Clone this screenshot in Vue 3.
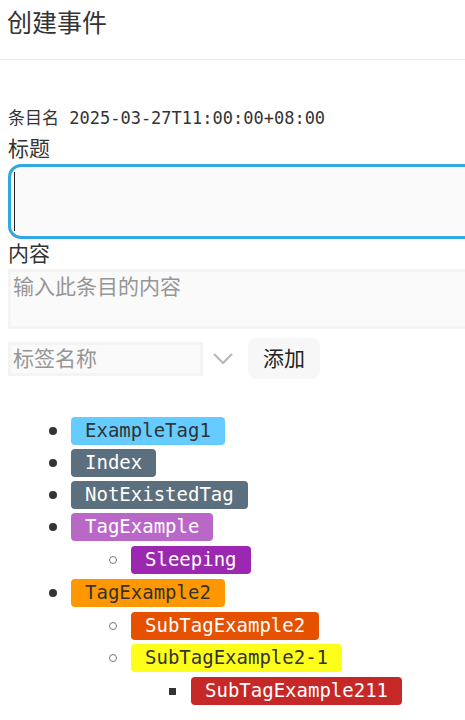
<script setup>
import { ref, h } from 'vue'

const title = ref('')
const content = ref('')
const tagName = ref('')

const tags = [
  { name: 'ExampleTag1', color: 'sky' },
  { name: 'Index', color: 'slate' },
  { name: 'NotExistedTag', color: 'slate' },
  { name: 'TagExample', color: 'orchid', children: [{ name: 'Sleeping', color: 'purple' }] },
  {
    name: 'TagExample2',
    color: 'orange',
    children: [
      { name: 'SubTagExample2', color: 'rust' },
      {
        name: 'SubTagExample2-1',
        color: 'yellow',
        children: [{ name: 'SubTagExample211', color: 'red' }],
      },
    ],
  },
]

const TagList = (props) =>
  h(
    'ul',
    { class: 'tags' },
    props.items.map((tag) =>
      h('li', { key: tag.name }, [
        h('div', { class: 'tag-row' }, [h('span', { class: ['tag', tag.color] }, tag.name)]),
        tag.children ? h(TagList, { items: tag.children }) : null,
      ]),
    ),
  )
TagList.props = ['items']
</script>

<template>
  <main class="page">
    <header class="header">
      <h1>创建事件</h1>
    </header>
    <form class="form" @submit.prevent>
      <p class="entry">条目名 2025-03-27T11:00:00+08:00</p>
      <label class="label" for="title">标题</label>
      <div class="title-box">
        <input id="title" v-model="title" class="title-input" type="text" />
      </div>
      <label class="label" for="content">内容</label>
      <textarea id="content" v-model="content" class="content-input" placeholder="输入此条目的内容"></textarea>
      <div class="adder">
        <input v-model="tagName" class="tag-input" type="text" placeholder="标签名称" aria-label="标签名称" />
        <button class="toggle" type="button" aria-label="展开">
          <svg width="20" height="12" viewBox="0 0 20 12" fill="none">
            <path d="M1 1L10 10L19 1" stroke="#b8b8b8" stroke-width="2.2" />
          </svg>
        </button>
        <button class="add" type="button">添加</button>
      </div>
    </form>
    <TagList :items="tags" />
  </main>
</template>

<style>
body {
  background: #fff;
  overflow-x: hidden;
}

.tags {
  list-style: none;
  margin: 0;
  padding: 0 0 0 71px;
}

.tags .tags {
  margin: 1px 0;
  padding-left: 60px;
}

.tags .tags .tags {
  margin-bottom: 0;
}

.tag-row {
  display: flex;
  align-items: center;
  height: 32px;
}

.tag-row::before {
  content: '';
  box-sizing: border-box;
  flex: none;
  width: 8px;
  height: 8px;
  margin-left: -22px;
  margin-right: 14px;
  border-radius: 50%;
  background: #333;
}

.tags .tags .tag-row::before {
  border: 1px solid #777;
  background: transparent;
}

.tags .tags .tags .tag-row::before {
  width: 7px;
  height: 7px;
  margin-right: 15px;
  border: 0;
  border-radius: 0;
  background: #333;
}

.tag {
  height: 28px;
  padding: 0 14px;
  border-radius: 4px;
  font: 19px/26px 'DejaVu Sans Mono', monospace;
  color: #fff;
  white-space: nowrap;
}

.sky { background: #66ccff; color: #333; }
.slate { background: #5c6f7e; }
.orchid { background: #ba68c8; }
.purple { background: #9c27b0; }
.orange { background: #ff9800; color: #333; }
.rust { background: #e65100; }
.yellow { background: #fdff1a; color: #333; }
.red { background: #c62828; }
</style>

<style scoped>
.page {
  color: #333;
  font-family: 'Noto Sans CJK SC', sans-serif;
  font-weight: 400;
  overflow: hidden;
  padding-bottom: 13px;
}

.header {
  padding: 4px 7px 20px;
  border-bottom: 1px solid #ebebeb;
}

h1 {
  margin: 0;
  font-size: 25px;
  line-height: 35px;
  font-weight: 400;
}

.form {
  padding: 44px 0 36px 8px;
}

.entry {
  margin: 0;
  padding-bottom: 2px;
  font: 17px/28px 'DejaVu Sans Mono', 'Noto Sans CJK SC', monospace;
  white-space: nowrap;
}

.label {
  display: block;
  padding-bottom: 4px;
  font-size: 21px;
  line-height: 26px;
}

.title-box {
  position: relative;
  height: 75px;
  margin-right: -16px;
}

.title-box::after {
  content: '';
  position: absolute;
  left: 6px;
  top: 8px;
  bottom: 8px;
  width: 1px;
  background: #222;
}

input,
textarea {
  box-sizing: border-box;
  display: block;
  margin: 0;
  border: 3px solid #f4f4f3;
  border-radius: 0;
  background: #fafafa;
  color: #333;
  font: 21px/26px 'Noto Sans CJK SC', sans-serif;
  outline: none;
}

input::placeholder,
textarea::placeholder {
  color: #969696;
  opacity: 1;
}

.title-input {
  width: 100%;
  height: 100%;
  padding: 0 4px;
  border-color: #30a9de;
  border-radius: 13px;
}

.content-input {
  width: calc(100% + 16px);
  height: 60px;
  padding: 0 2px;
  resize: none;
  overflow: hidden;
}

.adder {
  display: flex;
  align-items: center;
  margin-top: 9px;
}

.tag-input {
  width: 195px;
  height: 34px;
  padding: 0 2px 4px;
}

button {
  border: 0;
  font: 21px/30px 'Noto Sans CJK SC', sans-serif;
  color: #222;
}

.toggle {
  display: flex;
  margin: 0 15px 0 10px;
  padding: 0;
  background: transparent;
}

.add {
  height: 41px;
  padding: 0 15px 4px;
  border-radius: 8px;
  background: #f7f7f7;
}
</style>
